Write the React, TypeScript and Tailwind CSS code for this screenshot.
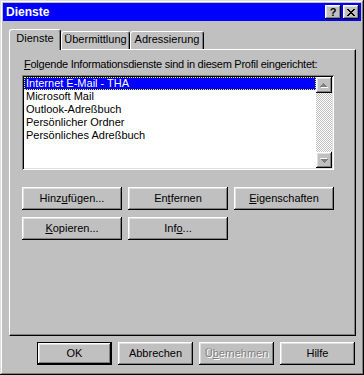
import React from "react";

const raised =
    "shadow-[inset_-1px_-1px_#000,inset_1px_1px_#fff,inset_-2px_-2px_#808080,inset_2px_2px_#dfdfdf]";

function Btn({
    children,
    className = "",
    isDefault,
    disabled,
}: {
    children: React.ReactNode;
    className?: string;
    isDefault?: boolean;
    disabled?: boolean;
}) {
    return (
        <div
            className={`h-[23px] flex items-center justify-center bg-[#c0c0c0] ${
                isDefault ? "border border-black" : ""
            } ${className}`}
        >
            <div
                className={`w-full h-full flex items-center justify-center pb-px ${raised} ${
                    disabled ? "text-[#808080] [text-shadow:1px_1px_0_#fff]" : "text-black"
                }`}
            >
                {children}
            </div>
        </div>
    );
}

function Tab({ label, active, className = "" }: { label: string; active?: boolean; className?: string }) {
    return (
        <div
            className={`flex items-start justify-center border-l border-t border-white border-r border-r-black rounded-t-[3px] shadow-[inset_-1px_0_#808080] bg-[#c0c0c0] ${
                active ? "relative z-10 h-[21px] -mb-px pt-[2px]" : "h-[18px] pt-px"
            } ${className}`}
        >
            {label}
        </div>
    );
}

function Arrow({ down }: { down?: boolean }) {
    return (
        <div className={`w-[16px] h-[16px] flex items-center justify-center bg-[#c0c0c0] ${raised}`}>
            <svg width="8" height="5" viewBox="0 0 8 5" shapeRendering="crispEdges" className={down ? "rotate-180" : ""}>
                <g fill="#fff">
                    <rect x="4" y="1" width="1" height="1" />
                    <rect x="5" y="2" width="1" height="1" />
                    <rect x="6" y="3" width="1" height="1" />
                    <rect x="1" y="4" width="7" height="1" />
                </g>
                <g fill="#808080">
                    <rect x="3" y="0" width="1" height="1" />
                    <rect x="2" y="1" width="3" height="1" />
                    <rect x="1" y="2" width="5" height="1" />
                    <rect x="0" y="3" width="7" height="1" />
                </g>
            </svg>
        </div>
    );
}

const services = [
    "Internet E-Mail - THA",
    "Microsoft Mail",
    "Outlook-Adreßbuch",
    "Persönlicher Ordner",
    "Persönliches Adreßbuch",
];

export default function App() {
    return (
        <div
            className={`w-[364px] h-[375px] p-[3px] flex flex-col bg-[#c0c0c0] text-[11px] leading-[13px] text-black font-['Liberation_Sans',Arial,sans-serif] shadow-[inset_-1px_-1px_#000,inset_1px_1px_#dfdfdf,inset_-2px_-2px_#808080,inset_2px_2px_#fff]`}
        >
            {/* title bar */}
            <div className="h-[18px] bg-[#0000ff] flex items-center pl-[3px] pr-[2px]">
                <span className="text-white font-bold text-[12px]">Dienste</span>
                <div className="ml-auto flex">
                    <div className={`w-[16px] h-[14px] flex items-center justify-center bg-[#c0c0c0] font-bold text-[11px] leading-none ${raised}`}>
                        ?
                    </div>
                    <div className={`ml-[2px] w-[16px] h-[14px] flex items-center justify-center bg-[#c0c0c0] ${raised}`}>
                        <svg width="8" height="7" viewBox="0 0 8 7" shapeRendering="crispEdges" fill="#000">
                            <rect x="0" y="0" width="2" height="1" />
                            <rect x="6" y="0" width="2" height="1" />
                            <rect x="1" y="1" width="2" height="1" />
                            <rect x="5" y="1" width="2" height="1" />
                            <rect x="2" y="2" width="4" height="1" />
                            <rect x="3" y="3" width="2" height="1" />
                            <rect x="2" y="4" width="4" height="1" />
                            <rect x="1" y="5" width="2" height="1" />
                            <rect x="5" y="5" width="2" height="1" />
                            <rect x="0" y="6" width="2" height="1" />
                            <rect x="6" y="6" width="2" height="1" />
                        </svg>
                    </div>
                </div>
            </div>

            <div className="flex flex-col pl-[6px] pt-[8px]">
                {/* tabs */}
                <div className="flex items-end h-[20px]">
                    <Tab label="Dienste" active className="w-[52px]" />
                    <Tab label="Übermittlung" className="w-[69px]" />
                    <Tab label="Adressierung" className="w-[74px]" />
                </div>

                {/* panel */}
                <div className="w-[347px] h-[287px] border-l border-t border-white border-r border-b border-r-black border-b-black shadow-[inset_-1px_-1px_#808080] pl-[12px] pt-[8px] flex flex-col">
                    <div className="pl-[2px] h-[13px] mb-[4px] tracking-[-0.25px]">
                        <span className="underline">F</span>olgende Informationsdienste sind in diesem Profil eingerichtet:
                    </div>

                    {/* list box */}
                    <div className="w-[312px] h-[95px] p-[2px] flex bg-white shadow-[inset_1px_1px_#808080,inset_-1px_-1px_#fff,inset_2px_2px_#000,inset_-2px_-2px_#dfdfdf]">
                        <div className="flex-1 flex flex-col">
                            {services.map((s, i) => (
                                <div
                                    key={s}
                                    className={`h-[13px] px-[2px] whitespace-nowrap ${
                                        i === 0
                                            ? "bg-[#0000ff] text-white outline-1 outline-dotted outline-[#ffff00] -outline-offset-1"
                                            : ""
                                    }`}
                                >
                                    {s}
                                </div>
                            ))}
                        </div>
                        <div className="w-[16px] flex flex-col">
                            <Arrow />
                            <div className="flex-1 bg-[repeating-conic-gradient(#c0c0c0_0%_25%,#fff_0%_50%)] bg-[length:2px_2px]" />
                            <Arrow down />
                        </div>
                    </div>

                    <div className="mt-[17px] flex gap-[6px]">
                        <Btn className="w-[100px]">
                            Hinz<span className="underline">u</span>fügen...
                        </Btn>
                        <Btn className="w-[100px]">
                            En<span className="underline">t</span>fernen
                        </Btn>
                        <Btn className="w-[100px]">
                            <span className="underline">E</span>igenschaften
                        </Btn>
                    </div>
                    <div className="mt-[7px] flex gap-[6px]">
                        <Btn className="w-[100px]">
                            <span className="underline">K</span>opieren...
                        </Btn>
                        <Btn className="w-[100px]">
                            Inf<span className="underline">o</span>...
                        </Btn>
                    </div>
                </div>

                {/* dialog buttons */}
                <div className="mt-[6px] flex gap-[6px] pl-[28px]">
                    <Btn isDefault className="w-[75px]">
                        OK
                    </Btn>
                    <Btn className="w-[75px]">Abbrechen</Btn>
                    <Btn disabled className="w-[75px]">
                        Ü<span className="underline">b</span>ernehmen
                    </Btn>
                    <Btn className="w-[75px]">Hilfe</Btn>
                </div>
            </div>
        </div>
    );
}
